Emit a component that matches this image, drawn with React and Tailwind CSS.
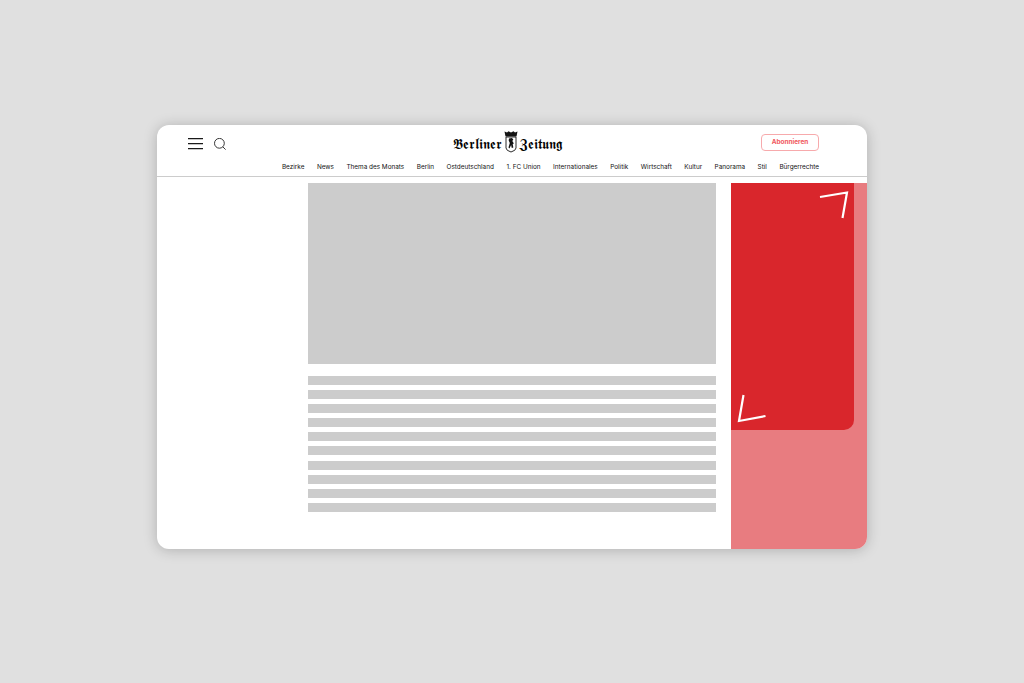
const NAV = ["Bezirke","News","Thema des Monats","Berlin","Ostdeutschland","1. FC Union","Internationales","Politik","Wirtschaft","Kultur","Panorama","Stil","Bürgerrechte"];
const LINES = [0,1,2,3,4,5,6,7,8,9];

function Crest() {
  return (
    <svg width="14" height="22" viewBox="0 0 14 22" className="mx-[1.5px] -mt-[4px] shrink-0" aria-hidden="true">
      <path d="M.5 .5 L3 1.5 L4.5 .3 L7 1.5 L9.5 .3 L11 1.5 L13.5 .5 L12.5 5.5 H1.5 Z" fill="#111" />
      <path d="M2 6 H12 V17 Q12 19.5 7 21 Q2 19.5 2 17 Z" fill="#fff" stroke="#111" strokeWidth=".9" />
      <path d="M5 7.5 L8 7 L9.3 8.5 L8.3 10 L9.9 12.5 L8.7 12.9 L9.3 16.5 L7.8 17 L7.1 14 L5.5 17.5 L4.5 16.5 L5.8 12 L4.7 9.5 Z" fill="#111" />
    </svg>
  );
}

export default function App() {
  return (
    <div className="h-[683px] overflow-hidden bg-[#e0e0e0] pt-[125px] font-['Inter','Liberation_Sans',sans-serif]">
      <div className="mx-auto flex h-[424px] w-[710px] flex-col overflow-hidden rounded-[12px] bg-white shadow-[0_1px_14px_rgba(0,0,0,0.22)]">
        <header className="h-[52px] shrink-0 border-b border-[#cccccc]">
          <div className="grid h-[34px] grid-cols-[1fr_auto_1fr] items-center pl-[31px] pr-[48px] pt-[1px]">
            <div className="flex items-center gap-[11px] pt-[3px]">
              <svg width="15" height="12" viewBox="0 0 15 12" aria-hidden="true">
                <path d="M0 .6H15M0 5.6H15M0 10.6H15" stroke="#1a1a1a" strokeWidth="1.3" fill="none" />
              </svg>
              <svg width="13" height="13" viewBox="0 0 13 13" aria-hidden="true">
                <circle cx="5.4" cy="5.3" r="4.9" stroke="#222" strokeWidth=".9" fill="none" />
                <path d="M8.9 8.9L11.6 11.6" stroke="#222" strokeWidth=".9" fill="none" />
              </svg>
            </div>
            <div className="ml-[8px] flex h-[18px] w-[111px] items-center justify-center whitespace-nowrap pt-[3px] text-[14px] leading-none text-black opacity-[0.99] font-['DejaVu_Serif','Liberation_Serif',serif]">
              <span>𝕭𝖊𝖗𝖑𝖎𝖓𝖊𝖗</span>
              <Crest />
              <span>𝖅𝖊𝖎𝖙𝖚𝖓𝖌</span>
            </div>
            <div className="flex justify-end">
              <button className="flex h-[17px] w-[58px] items-center justify-center rounded-[4px] border border-[#f7a9ac] text-[6.4px] font-bold text-[#f0555a] opacity-[0.99]">
                Abonnieren
              </button>
            </div>
          </div>
          <nav className="mt-[1px] flex h-[14px] items-center justify-end gap-[12.5px] pr-[48px] text-[6.4px] leading-none text-[#111111] opacity-[0.99]">
            {NAV.map((n) => (
              <span key={n} className="whitespace-nowrap">{n}</span>
            ))}
          </nav>
        </header>
        <div className="flex min-h-0 flex-1 pt-[6px]">
          <main className="ml-[151px] w-[408px]">
            <div className="h-[181px] bg-[#cccccc]" />
            <div className="mt-[12px] flex flex-col gap-[5.1px]">
              {LINES.map((i) => (
                <div key={i} className="h-[9px] bg-[#cccccc]" />
              ))}
            </div>
          </main>
          <aside className="relative ml-[14.5px] w-[136.5px] bg-[#e87c80]">
            <div className="h-[247px] w-[123.5px] rounded-br-[10px] bg-[#d9262c]" />
            <svg className="absolute left-0 top-0" width="136" height="254" viewBox="0 0 136 254" fill="none" aria-hidden="true">
              <path d="M89 14L116 9.5L111.5 35" stroke="#fff" strokeWidth="2.2" />
              <path d="M12.5 212L8 238L34.5 233" stroke="#fff" strokeWidth="2.2" />
            </svg>
          </aside>
        </div>
      </div>
    </div>
  );
}
